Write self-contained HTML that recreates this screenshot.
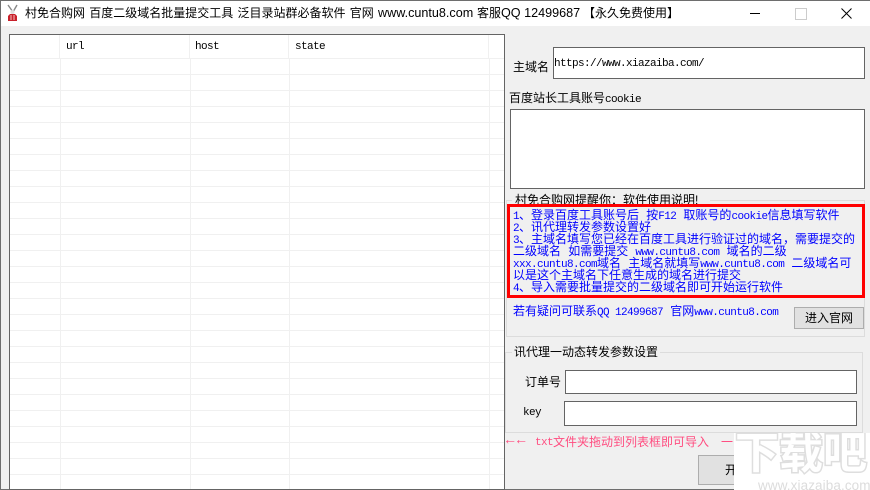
<!DOCTYPE html>
<html><head><meta charset="utf-8">
<style>
html,body{margin:0;padding:0}
body{width:870px;height:490px;overflow:hidden;position:relative;background:#f0f0f0;font-family:"Liberation Sans","WenQuanYi Zen Hei","Noto Sans CJK SC",sans-serif;font-size:12px;color:#000}
.a{position:absolute}
.t{position:absolute;white-space:pre;line-height:14px}
.m{font-family:"Liberation Mono","WenQuanYi Zen Hei","Noto Sans CJK SC",monospace}
.l{font-size:11px;letter-spacing:-.6px}
.box{position:absolute;background:#fff;border:1px solid #646464;box-sizing:border-box}
.btn{position:absolute;background:#e1e1e1;border:1px solid #adadad;box-sizing:border-box;text-align:center}
.h{position:absolute;left:10px;width:494px;height:1px;background:#f0f0f0}
.v{position:absolute;width:1px;background:#f0f0f0}
.b{position:absolute;left:513px;white-space:pre;line-height:12px;font-size:12px;color:#0000ff;font-family:"Liberation Mono","WenQuanYi Zen Hei","Noto Sans CJK SC",monospace}
.b i{font-style:normal;font-size:11px;letter-spacing:-.6px}
.g{position:absolute;border:1px solid #dcdcdc;box-sizing:border-box}
</style></head><body>
<div class="a" style="left:0;top:0;width:870px;height:26px;background:#fff"></div>
<div class="a" style="left:0;top:0;width:870px;height:1px;background:#6e6e6e"></div>
<div class="a" style="left:0;top:0;width:1px;height:490px;background:#6e6e6e"></div>
<div class="a" style="left:0;top:489px;width:870px;height:1px;background:#6e6e6e"></div>
<svg class="a" style="left:5px;top:4px" width="16" height="19" viewBox="0 0 16 19">
<path d="M3 1L8 8M12 1L8 8" stroke="#888" stroke-width="1.4" fill="none"/>
<path d="M5 10L10 10L12 12L12 17L3 17L3 12Z" fill="#c8202a"/>
<circle cx="7.5" cy="8" r="2" fill="#ddd"/>
<path d="M6 11V16M9 11V16" stroke="#f3c0c0"/>
</svg>
<div class="t" style="left:25px;top:6px;font-size:12px;word-spacing:.9px">村免合购网 百度二级域名批量提交工具 泛目录站群必备软件 官网</div>
<div class="t" style="left:378px;top:6px;font-size:12.6px">www.cuntu8.com</div>
<div class="t" style="left:477px;top:6px;font-size:12px">客服</div>
<div class="t" style="left:501px;top:6px;font-size:12.6px">QQ 12499687</div>
<div class="t" style="left:583px;top:6px;font-size:12px">【永久免费使用】</div>
<div class="a" style="left:750px;top:13px;width:10px;height:1px;background:#000"></div>
<div class="a" style="left:795px;top:8px;width:10px;height:10px;border:1px solid #ccc"></div>
<svg class="a" style="left:841px;top:8px" width="11" height="11"><path d="M.5 .5L10.5 10.5M10.5 .5L.5 10.5" stroke="#000"/></svg>

<!-- table -->
<div class="a" style="left:9px;top:34px;width:496px;height:456px;background:#fff;border:1px solid #646464;box-sizing:border-box"></div>
<div class="v" style="left:59px;top:35px;height:24px"></div>
<div class="v" style="left:189px;top:35px;height:24px"></div>
<div class="v" style="left:288px;top:35px;height:24px"></div>
<div class="v" style="left:488px;top:35px;height:24px"></div>
<div class="v" style="left:60px;top:59px;height:430px"></div>
<div class="v" style="left:190px;top:59px;height:430px"></div>
<div class="v" style="left:289px;top:59px;height:430px"></div>
<div class="v" style="left:489px;top:59px;height:430px"></div>
<div class="h" style="top:58px"></div><div class="h" style="top:74px"></div><div class="h" style="top:90px"></div><div class="h" style="top:106px"></div><div class="h" style="top:122px"></div><div class="h" style="top:138px"></div><div class="h" style="top:154px"></div><div class="h" style="top:170px"></div><div class="h" style="top:186px"></div><div class="h" style="top:202px"></div><div class="h" style="top:218px"></div><div class="h" style="top:234px"></div><div class="h" style="top:250px"></div><div class="h" style="top:266px"></div><div class="h" style="top:282px"></div><div class="h" style="top:298px"></div><div class="h" style="top:314px"></div><div class="h" style="top:330px"></div><div class="h" style="top:346px"></div><div class="h" style="top:362px"></div><div class="h" style="top:378px"></div><div class="h" style="top:394px"></div><div class="h" style="top:410px"></div><div class="h" style="top:426px"></div><div class="h" style="top:442px"></div><div class="h" style="top:458px"></div><div class="h" style="top:474px"></div>
<div class="t m l" style="left:66px;top:40px">url</div>
<div class="t m l" style="left:195px;top:40px">host</div>
<div class="t m l" style="left:295px;top:40px">state</div>

<!-- right -->
<div class="t" style="left:513px;top:60px;font-size:12px">主域名</div>
<div class="box" style="left:553px;top:47px;width:312px;height:32px"></div>
<div class="t m l" style="left:554px;top:57px">https://www.xiazaiba.com/</div>
<div class="t" style="left:509px;top:91px;font-size:12px">百度站长工具账号<span class="m l">cookie</span></div>
<div class="box" style="left:510px;top:109px;width:355px;height:80px"></div>

<div class="g" style="left:506px;top:200px;width:359px;height:137px"></div>
<div class="a" style="left:512px;top:192px;width:198px;height:12px;background:#f0f0f0"></div>
<div class="t" style="left:515px;top:193px;font-size:12px">村免合购网提醒你：软件使用说明!</div>
<div class="a" style="left:507px;top:204px;width:358px;height:94px;border:3px solid #f00;box-sizing:border-box"></div>
<div class="b" style="top:210px"><i>1</i>、登录百度工具账号后 按<i>F12</i> 取账号的<i>cookie</i>信息填写软件</div>
<div class="b" style="top:222px"><i>2</i>、讯代理转发参数设置好</div>
<div class="b" style="top:234px"><i>3</i>、主域名填写您已经在百度工具进行验证过的域名，需要提交的</div>
<div class="b" style="top:246px">二级域名 如需要提交 <i>www.cuntu8.com</i> 域名的二级</div>
<div class="b" style="top:258px"><i>xxx.cuntu8.com</i>域名 主域名就填写<i>www.cuntu8.com</i> 二级域名可</div>
<div class="b" style="top:270px">以是这个主域名下任意生成的域名进行提交</div>
<div class="b" style="top:282px"><i>4</i>、导入需要批量提交的二级域名即可开始运行软件</div>
<div class="b" style="top:306px">若有疑问可联系<i>QQ 12499687</i> 官网<i>www.cuntu8.com</i></div>
<div class="btn" style="left:794px;top:307px;width:70px;height:22px;font-size:12px;line-height:20px">进入官网</div>

<div class="g" style="left:505px;top:352px;width:358px;height:81px"></div>
<div class="a" style="left:512px;top:344px;width:148px;height:14px;background:#f0f0f0"></div>
<div class="t" style="left:514px;top:345px;font-size:12px">讯代理一动态转发参数设置</div>
<div class="t" style="left:525px;top:375px;font-size:12px">订单号</div>
<div class="box" style="left:565px;top:370px;width:292px;height:24px"></div>
<div class="t m l" style="left:523px;top:406px">key</div>
<div class="box" style="left:564px;top:401px;width:293px;height:25px"></div>
<div class="t m" style="left:506px;top:434px;font-size:14px;color:#ff4d80;letter-spacing:2.6px">←←</div>
<div class="t m l" style="left:535px;top:436px;color:#ff4d80">txt</div>
<div class="t m" style="left:553px;top:436px;font-size:12px;color:#ff4d80">文件夹拖动到列表框即可导入</div>
<div class="t m" style="left:721px;top:436px;font-size:12px;color:#ff4d80">一</div>
<div class="btn" style="left:698px;top:455px;width:100px;height:30px;font-size:12px;line-height:28px;text-align:left;padding-left:26px">开</div>

<!-- watermark -->
<div class="a" style="left:734px;top:433px;width:136px;height:57px;background:#fff;overflow:hidden">
<div class="t" style="left:1px;top:-4px;font-size:44px;line-height:50px;font-weight:bold;color:#fff;-webkit-text-stroke:3px #dedede;paint-order:stroke fill;letter-spacing:0">下载吧</div>
<div class="t" style="left:24px;top:47px;font-size:13.5px;line-height:12px;color:#dcdcdc;letter-spacing:.1px">www.xiazaiba.com</div>
</div>
</body></html>
